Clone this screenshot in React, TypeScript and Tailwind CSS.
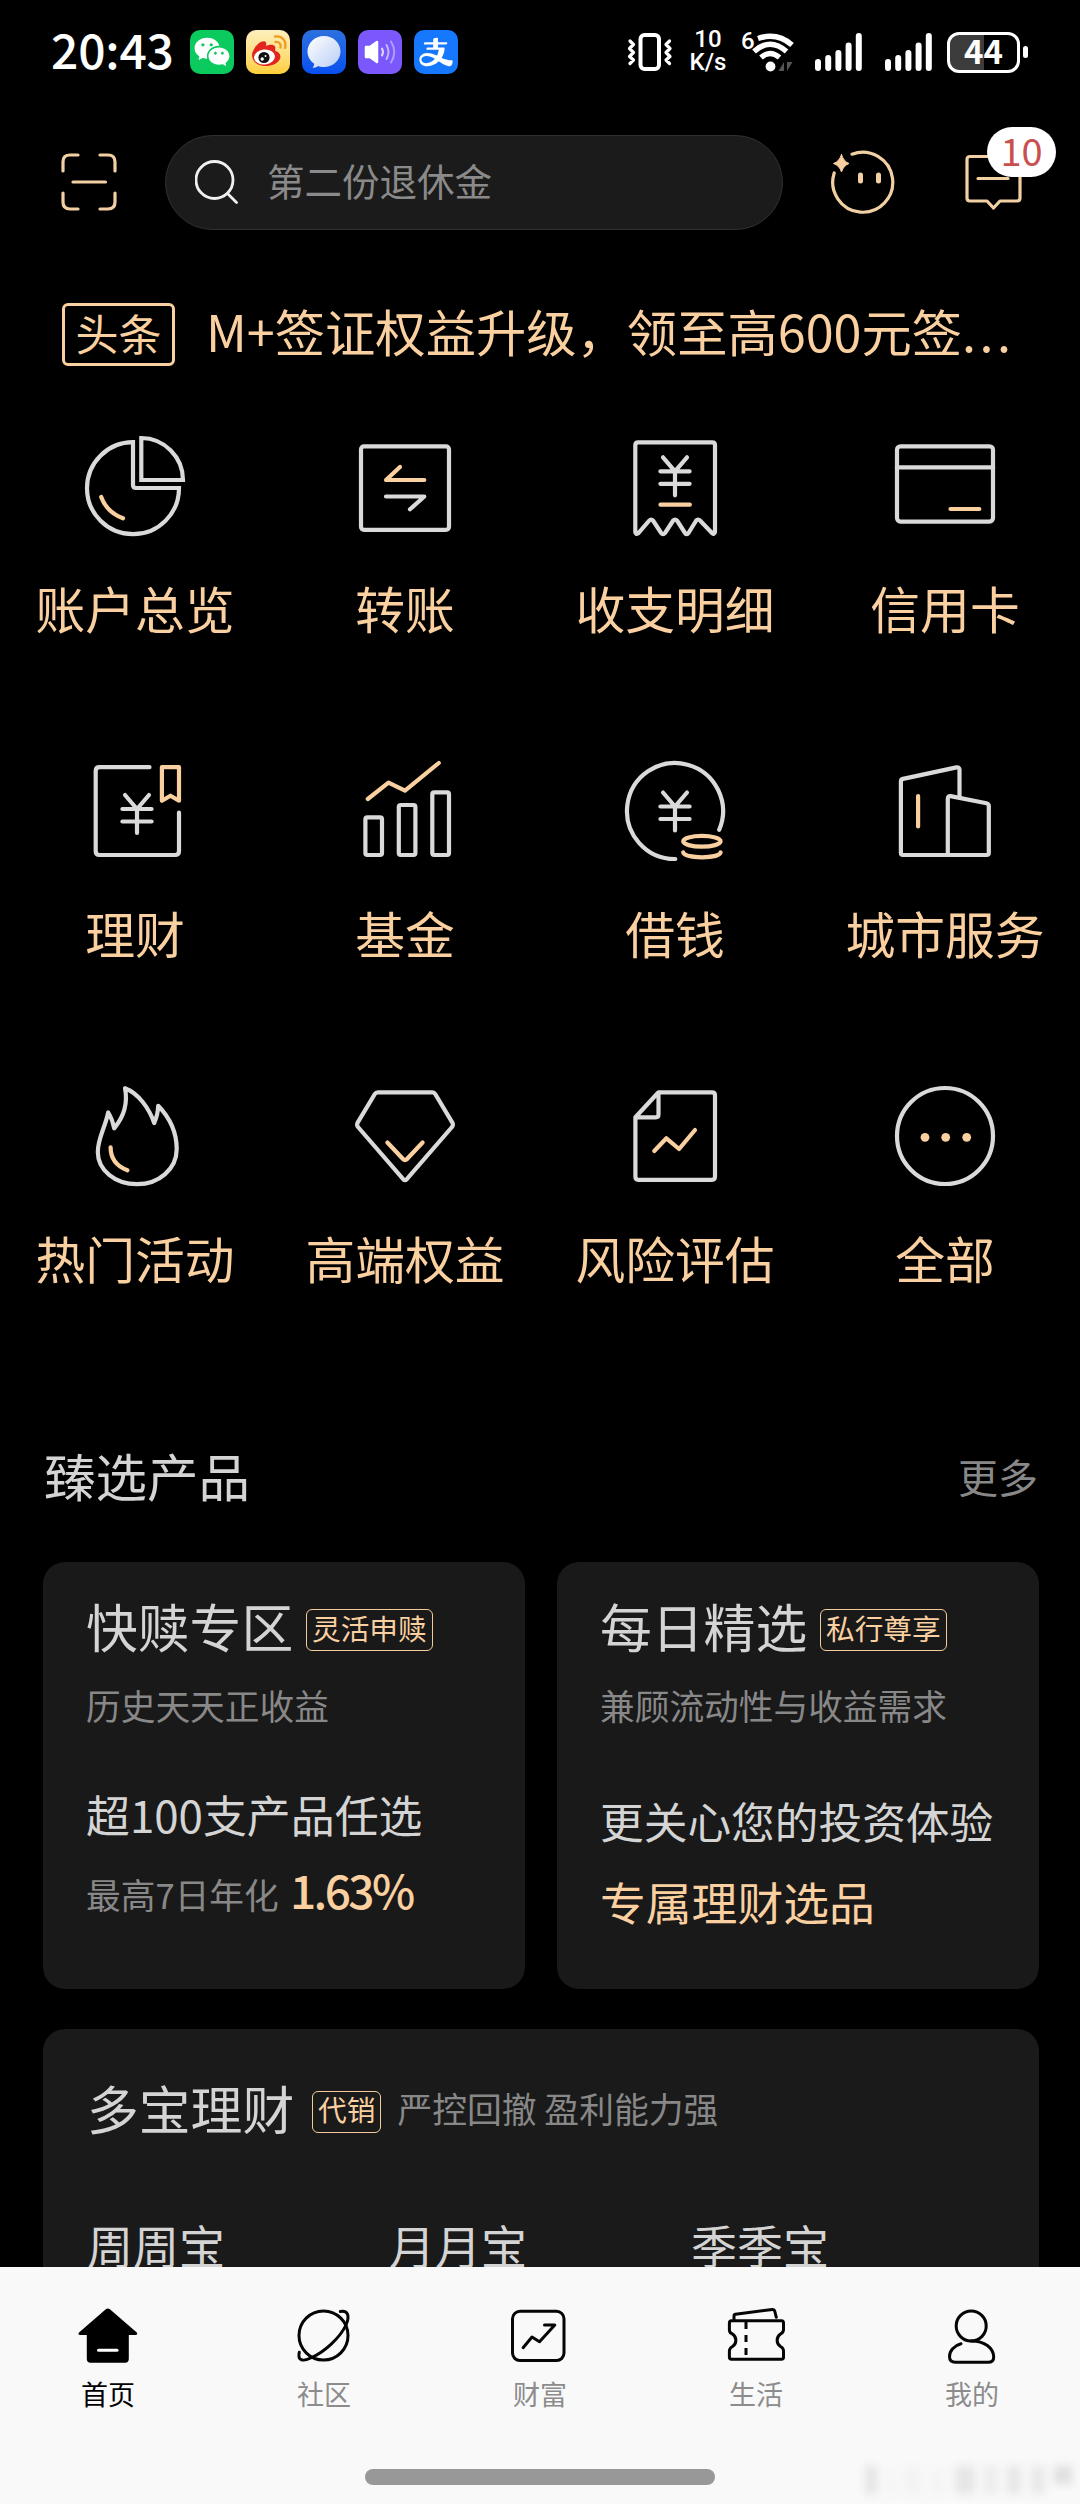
import type { ReactNode } from "react";
import { AiOutlineAlipay } from "react-icons/ai";
import { RiWechatFill } from "react-icons/ri";

const GOLD = "#fad0a0";
const SILVER = "#dadada";

function LineIcon({ children }: { children: ReactNode }) {
  return (
    <svg viewBox="0 0 100 100" className="block size-[100px] overflow-visible" fill="none" stroke={SILVER} strokeWidth={4.2} strokeLinecap="round" strokeLinejoin="round">
      {children}
    </svg>
  );
}

function Yen({ x, y }: { x: number; y: number }) {
  return (
    <path d={`M${x - 12} ${y}L${x} ${y + 14}L${x + 12} ${y}M${x} ${y + 14}V${y + 38}M${x - 14.6} ${y + 14}H${x + 14.6}M${x - 14.6} ${y + 26.5}H${x + 14.6}`} />
  );
}

const shortcuts: { label: string; icon: ReactNode }[] = [
  {
    label: "账户总览",
    icon: (
      <LineIcon>
        <path strokeLinejoin="miter" d="M48 6.2A46 46 0 1 0 94 52H51Q48 52 48 49Z" />
        <path strokeLinejoin="miter" d="M56.3 2V44H98A42 42 0 0 0 56.3 2Z" />
        <path stroke={GOLD} d="M16.2 61Q21.5 76 38 82.3" />
      </LineIcon>
    ),
  },
  {
    label: "转账",
    icon: (
      <LineIcon>
        <rect x="6" y="10.3" width="88" height="83.5" rx="3" />
        <path stroke={GOLD} d="M45 31L31 44H69.3" />
        <path d="M31 60.5H69.3L55 73.3" />
      </LineIcon>
    ),
  },
  {
    label: "收支明细",
    icon: (
      <LineIcon>
        <path d="M10.3 9Q10.3 6.3 13 6.3H87.3Q90 6.3 90 9V96Q89.5 99 87 97L75 84.5Q73 82.5 71.2 84.5L63.5 97Q61.7 99.5 60 97L52 84.5Q50 82.5 48.2 84.5L40 97Q38 99.5 36.2 97L28 84.5Q26 82.5 24.3 84.5L13.2 97.3Q10.6 99 10.3 96Z" />
        <Yen x={50} y={21.3} />
        <path stroke={GOLD} d="M35.5 68.7H64.8" />
      </LineIcon>
    ),
  },
  {
    label: "信用卡",
    icon: (
      <LineIcon>
        <rect x="2" y="10.3" width="96" height="75.3" rx="3.5" />
        <path d="M2 31.3H98" />
        <path stroke={GOLD} d="M55.5 73H84.3" />
      </LineIcon>
    ),
  },
  {
    label: "理财",
    icon: (
      <LineIcon>
        <path d="M64.5 6.2H14.5Q10.7 6.2 10.7 10V90Q10.7 94 14.5 94H90Q94 94 94 90V51.5" />
        <path stroke={GOLD} d="M76.9 6.2H94V39.7L85.5 34.7L76.9 39.7Z" />
        <Yen x={52} y={34} />
      </LineIcon>
    ),
  },
  {
    label: "基金",
    icon: (
      <LineIcon>
        <rect x="10.4" y="56.3" width="16.6" height="37.7" rx="2" />
        <rect x="43.8" y="44" width="16.6" height="50" rx="2" />
        <rect x="77.3" y="31.3" width="16.7" height="62.7" rx="2" />
        <path stroke={GOLD} d="M12.8 38L33.5 21.7L50 29.7L83.8 2" />
      </LineIcon>
    ),
  },
  {
    label: "借钱",
    icon: (
      <LineIcon>
        <path d="M50.3 98A48 48 0 1 1 94.2 68.7" />
        <Yen x={50} y={31.5} />
        <ellipse stroke={GOLD} cx="76.9" cy="80.3" rx="18.7" ry="5.4" />
        <path stroke={GOLD} d="M58.2 91.5C61 98 93 98 95.6 91.5" />
      </LineIcon>
    ),
  },
  {
    label: "城市服务",
    icon: (
      <LineIcon>
        <path d="M52.8 94H8Q5.9 94 5.9 92V20.5Q5.9 18.4 8 17.9L61.5 6.4Q64.3 6 64.5 8.5V36.5" />
        <path d="M52.8 38V92Q52.8 94 55 94H91.5Q93.8 94 93.8 92V45Q93.8 42.8 91.5 42.2L55.5 35.1Q52.8 34.8 52.8 38Z" />
        <path stroke={GOLD} d="M23.1 35V65.5" />
      </LineIcon>
    ),
  },
  {
    label: "热门活动",
    icon: (
      <LineIcon>
        <path d="M40 2.2C53 7 64 22 69.2 37C71.5 32 73 26 73.2 19.8C84 31 91.7 45 91.7 63C91.7 83 74 98.2 52 98.2C30 98.2 12.8 84 12.8 66C12.8 52 20 42 23.2 26.5C26 31 28 36 29.2 42.3C37 33 43.5 20 40 2.2Z" />
        <path stroke={GOLD} d="M25.6 61.3C25.6 72 31 80 42.4 84.3" />
      </LineIcon>
    ),
  },
  {
    label: "高端权益",
    icon: (
      <LineIcon>
        <path d="M23 6.3H77.5Q79.2 6.3 80.2 8L97.5 36.8Q98.5 39 97 41L51.8 93.2Q50 95 48.2 93.2L3 41Q1.5 39 2.5 36.8L19.8 8Q20.8 6.3 23 6.3Z" />
        <path stroke={GOLD} d="M32.4 56.5L48 73Q50 75.2 52 73L67.6 56.5" />
      </LineIcon>
    ),
  },
  {
    label: "风险评估",
    icon: (
      <LineIcon>
        <path d="M33.5 6.3H87Q90 6.3 90 9.3V90.5Q90 93.8 87 93.8H13.3Q10.4 93.8 10.4 90.5V31.3ZM33.5 6.3V28.5Q33.5 31.3 30.8 31.3H10.4" />
        <path stroke={GOLD} d="M29.3 65L41.4 52.3L54.1 63L70 44" />
      </LineIcon>
    ),
  },
  {
    label: "全部",
    icon: (
      <LineIcon>
        <circle cx="50" cy="50" r="48" />
        <g fill={GOLD} stroke="none">
          <circle cx="30" cy="51.3" r="4.4" />
          <circle cx="50.7" cy="51.3" r="4.4" />
          <circle cx="71.7" cy="51.3" r="4.4" />
        </g>
      </LineIcon>
    ),
  },
];

function Signal() {
  return (
    <svg viewBox="0 0 48 38" className="block h-[38px] w-[48px]" stroke="#fff" strokeWidth={6} strokeLinecap="round">
      <path d="M3 29V35M13.2 25V35M23.4 20V35M33.6 12.5V35M43.8 3V35" />
    </svg>
  );
}

function StatusBar() {
  return (
    <div className="flex h-[104px] shrink-0 items-center text-white">
      <div className="ml-[51px] -mt-[8px] w-[139px] whitespace-nowrap text-[48px] leading-[60px] font-medium tracking-[-0.2px]">20:43</div>
      <div className="flex gap-3">
        <div className="flex size-11 items-center justify-center rounded-[10px] bg-[#0ccb5e]">
          <RiWechatFill className="size-[38px] text-white" />
        </div>
        <svg viewBox="0 0 44 44" className="size-11 rounded-[10px] bg-linear-to-b from-[#fdf0bd] to-[#ffcf35]">
          <path d="M6 25C6 19 14 10 19 11.500C21 12.500 20 15 20 16C23 14.500 28 14 29 16.500C30 18.500 28.500 20 29.500 21C33 22 35.500 25 34 29C31.500 34 25 36.500 18 36C11 35.500 6 31 6 25Z" fill="#e2251f" />
          <ellipse cx="18.500" cy="27" rx="10.500" ry="7.500" fill="#fff" transform="rotate(-6 18.500 27)" />
          <circle cx="18" cy="27.500" r="5.600" fill="#111" />
          <circle cx="16.200" cy="29" r="1.700" fill="#fff" />
          <circle cx="19.500" cy="26" r="1" fill="#fff" />
          <path d="M29 6.500C36 5.500 41 11 39 18M29.500 12C33 11.500 35.500 14 34.500 17.500" fill="none" stroke="#ef9c22" strokeWidth="2.300" strokeLinecap="round" />
        </svg>
        <svg viewBox="0 0 44 44" className="size-11 rounded-[10px] bg-linear-to-b from-[#2c70df] to-[#0a4ff0]">
          <defs>
            <linearGradient id="bubble" x1="0" y1="0" x2="1" y2="1">
              <stop offset="0" stopColor="#fff" />
              <stop offset="1" stopColor="#b9cdf6" />
            </linearGradient>
          </defs>
          <path d="M22 6C31 6 38.500 12.800 38.500 21.500S31 37 22 37C19.500 37 17.500 36.600 16 36C14.500 37.500 12.500 38 10.500 37.600C12 36.200 12.300 34.800 12 33.500C8 30.800 5.500 26.500 5.500 21.500C5.500 12.800 13 6 22 6Z" fill="url(#bubble)" />
        </svg>
        <svg viewBox="0 0 44 44" className="size-11 rounded-[10px] bg-[#7a58fb]" fill="none" strokeLinecap="round">
          <path d="M8 17H12L19 12V32L12 27H8Z" fill="#fff" stroke="#fff" strokeWidth="2.500" strokeLinejoin="round" />
          <path d="M24 18.500Q26 22 24 25.500" stroke="#e0d8ff" strokeWidth="2" />
          <path d="M28.500 15Q32.500 22 28.500 29" stroke="#c3b4ff" strokeWidth="2" />
          <path d="M33 11.500Q39.500 22 33 32.500" stroke="#b09dff" strokeWidth="2" />
        </svg>
        <div className="flex size-11 items-center justify-center rounded-[10px] bg-[#1677ff]">
          <AiOutlineAlipay className="size-[38px] text-white" />
        </div>
      </div>
      <div className="ml-auto mr-[52px] flex items-center">
        <svg viewBox="0 0 46 38" className="h-[38px] w-[46px]" fill="none" stroke="#fff" strokeLinecap="round" strokeLinejoin="round">
          <rect x="13.500" y="2" width="18.500" height="34" rx="4" strokeWidth="4" />
          <path d="M3 8L6.500 11.500L2.500 15.500L6.500 19.500L2.500 23.500L6.500 27L3 30.500M42.500 8L39 11.500L43 15.500L39 19.500L43 23.500L39 27L42.500 30.500" strokeWidth="3.200" />
        </svg>
        <div className="ml-[11px] -mt-[2px] flex w-[48px] flex-col items-center font-['Roboto',sans-serif] text-[24px] leading-[23px] font-medium">
          <span>10</span>
          <span>K/s</span>
        </div>
        <div className="ml-[9px] flex h-[40px] w-[54px]">
          <span className="-mt-[7px] w-[12px] font-['Roboto',sans-serif] text-[24px] leading-[32px] font-medium">6</span>
          <svg viewBox="0 0 42 40" className="h-[40px] w-[42px] overflow-visible" fill="none" stroke="#fff" strokeWidth="5.500">
            <path d="M5 6.500Q24 0 39 13" />
            <path d="M1 19.500Q17 5 33.500 19.500" />
            <path d="M8 25.500Q17 17.500 26.500 25.500" />
            <circle cx="17.500" cy="34.500" r="4.900" fill="#fff" stroke="none" />
            <path d="M31 30V39H25.500ZM34 39V30H39.500Z" fill="#555" stroke="none" />
          </svg>
        </div>
        <div className="ml-[20px]"><Signal /></div>
        <div className="ml-[22px]"><Signal /></div>
        <div className="ml-[14px] flex h-[41px] w-[73px] items-center justify-center rounded-[12px] border-[3px] border-white bg-linear-to-r from-[#3c3c3c] from-50% to-black to-50%">
          <span className="-mt-[4px] text-[33px] leading-[35px] font-bold">44</span>
        </div>
        <div className="ml-[3px] h-[12px] w-[5px] rounded-full bg-white" />
      </div>
    </div>
  );
}

function Header() {
  return (
    <div className="flex h-[156px] shrink-0 items-center pl-[61px]">
      <svg viewBox="0 0 56 58" className="h-[58px] w-[56px]" fill="none" stroke="#f3d0a3" strokeWidth="3.200" strokeLinecap="round">
        <path d="M17 2H9Q2 2 2 9V18M39 2H47Q54 2 54 9V18M2 40V49Q2 56 9 56H17M54 40V49Q54 56 47 56H39M12 29H44.500" />
      </svg>
      <div className="ml-[48px] flex h-[95px] w-[618px] items-center rounded-full border border-[#303030] bg-[#1b1b1b] pl-[29px]">
        <svg viewBox="0 0 44 44" className="size-11" fill="none" stroke="#f0f0f0" strokeWidth="2.800" strokeLinecap="round">
          <circle cx="19.500" cy="20" r="18.500" />
          <path d="M33 34L41.500 42.500" />
        </svg>
        <span className="ml-[28px] -mt-[5px] text-[37.500px] leading-[50px] text-[#8a8a8a]">第二份退休金</span>
      </div>
      <svg viewBox="0 0 64 66" className="ml-[48px] h-[66px] w-[64px]" fill="none" stroke="#f3d0a3" strokeWidth="3.200" strokeLinecap="round">
        <path d="M21 5.200A30 30 0 1 1 3.200 24" />
        <path d="M10.500 5.500Q12.500 12.500 18 14.500Q12.500 16.500 10.500 23Q8.500 16.500 2.500 14.500Q8.500 12.500 10.500 5.500Z" fill="#fad0a0" stroke="#fad0a0" strokeWidth="1" />
        <path d="M29.500 26V32M47.500 26V32" strokeWidth="5" />
      </svg>
      <div className="relative ml-[70px] h-[58px] w-[58px]">
        <svg viewBox="0 0 58 58" className="size-[58px]" fill="none" stroke="#f3d0a3" strokeWidth="3.200" strokeLinecap="round" strokeLinejoin="round">
          <path d="M5 3.500H52Q55 3.500 55 6.500V45Q55 48 52 48H35L28.500 55L22 48H5Q2 48 2 45V6.500Q2 3.500 5 3.500ZM13 25.500H43" />
        </svg>
        <div className="absolute left-[22px] -top-[26px] flex h-[50px] w-[69px] items-center justify-center rounded-full bg-white">
          <span className="-mt-[5px] text-[38px] leading-[50px] text-[#c8504f]">10</span>
        </div>
      </div>
    </div>
  );
}

function Tag({ children }: { children: ReactNode }) {
  return (
    <span className="flex h-[42px] items-center rounded-[6px] border-[1.500px] border-[#f3cc9c] px-[5px] text-[28.700px] text-[#fad0a0]">
      <span className="-mt-[5px] leading-[40px]">{children}</span>
    </span>
  );
}

function ProductCard({ title, tag, note, children }: { title: string; tag: string; note: string; children: ReactNode }) {
  return (
    <div className="flex h-[427px] w-[482px] flex-col rounded-[22px] bg-[#191919] pl-[43px] pt-[34px] whitespace-nowrap">
      <div className="flex h-[60px] items-center">
        <h3 className="w-[220px] text-[51.800px] leading-[60px] text-[#d4d4d4]">{title}</h3>
        <div className="mt-[8px]"><Tag>{tag}</Tag></div>
      </div>
      <p className="mt-[24px] text-[34.700px] leading-[50px] text-[#888]">{note}</p>
      {children}
    </div>
  );
}

const tabs: { label: string; icon: ReactNode }[] = [
  {
    label: "首页",
    icon: (
      <>
        <path d="M27.500 3.500Q29.800 1.500 32.200 3.500L58.800 26.500Q60 28.800 57.500 29H50.800V53Q50.800 56.700 47 56.700H12.600Q8.800 56.700 8.800 53V29H2Q-0.500 28.800 1 26.500Z" fill="#000" stroke="none" />
        <path d="M20.500 44.300H39" stroke="#fff" />
      </>
    ),
  },
  {
    label: "社区",
    icon: (
      <>
        <circle cx="29.500" cy="29.500" r="24.500" />
        <path d="M46.300 5.500C54 4 56 10 52 19C46 32 30 46 17.700 51.500C8 56.500 3.500 54 5.300 46.300" />
      </>
    ),
  },
  {
    label: "财富",
    icon: (
      <>
        <rect x="2.500" y="5.300" width="51.500" height="49.300" rx="7.500" />
        <path d="M13.100 41.700L22 31L29.500 35.700L44.800 19H34.500" />
      </>
    ),
  },
  {
    label: "生活",
    icon: (
      <>
        <path d="M5.500 14.700H55.500Q57.500 14.700 57.500 17V24Q57 27 54.500 28C50 31 50 37.500 54.500 40.500Q57.500 42 57.500 45V51Q57.500 53.300 55.500 53.300H5.500Q3.400 53.300 3.400 51V45Q3.500 42 6.500 40.500C11 37.500 11 31 6.500 28Q3.400 27 3.400 24V17Q3.400 14.700 5.500 14.700Z" />
        <path d="M8 14V10Q8 8.500 9.500 8.300L46.500 3.500Q48.200 3.300 48.700 5L50.300 11.300" />
        <path d="M20 16V54" strokeDasharray="7 6" strokeLinecap="butt" />
      </>
    ),
  },
  {
    label: "我的",
    icon: (
      <>
        <circle cx="29.200" cy="20" r="15" />
        <path d="M19 37.700C12 39.500 7.500 45 7.500 50.500Q7.500 56.300 13.500 56.300H46Q52 56.300 51.700 50.500C51 42 43 35 29.200 35" />
      </>
    ),
  },
];

function TabBar() {
  return (
    <nav className="relative flex h-[237px] shrink-0 flex-col bg-[#f9f9f9]">
      <div className="grid grid-cols-5 pt-[39px]">
        {tabs.map((tab, i) => (
          <div key={tab.label} className="flex flex-col items-center">
            <svg viewBox="0 0 60 60" className="size-[60px] overflow-visible" fill="none" stroke="#050505" strokeWidth="3" strokeLinecap="round" strokeLinejoin="round">
              {tab.icon}
            </svg>
            <span className={i === 0 ? "mt-[8px] text-[27px] leading-[40px] text-black" : "mt-[8px] text-[27px] leading-[40px] text-[#8c8c8c]"}>{tab.label}</span>
          </div>
        ))}
      </div>
      <div className="mx-auto mt-[55px] h-[16px] w-[350px] rounded-full bg-[#989898]" />
      <div className="absolute right-[8px] bottom-[10px] flex h-[32px] w-[207px] items-end justify-between blur-[4px]">
        <i className="h-[28px] w-[12px] bg-[#e4e4e4]" />
        <i className="h-[24px] w-[8px] bg-[#f4f4f4]" />
        <i className="h-[26px] w-[18px] bg-[#f3f3f3]" />
        <i className="h-[24px] w-[14px] bg-[#f4f4f4]" />
        <i className="h-[28px] w-[20px] bg-[#e6e6e6]" />
        <i className="h-[28px] w-[14px] bg-[#ececec]" />
        <i className="h-[28px] w-[14px] bg-[#e6e6e6]" />
        <i className="h-[28px] w-[14px] bg-[#e8e8e8]" />
        <i className="mb-[10px] h-[18px] w-[18px] bg-[#dfdfdf]" />
      </div>
    </nav>
  );
}

export default function App() {
  return (
    <div className="flex h-[2504px] w-[1080px] flex-col overflow-hidden bg-black font-['Noto_Sans_CJK_SC',sans-serif]">
      <StatusBar />
      <Header />
      <div className="flex h-[149px] shrink-0 items-center pl-[62px] whitespace-nowrap text-[#fad0a0]">
        <div className="flex h-[63px] w-[113px] items-center justify-center rounded-[6px] border-[3px] border-[#fad0a0]">
          <span className="-mt-[6px] text-[43px] leading-[56px]">头条</span>
        </div>
        <div className="-mt-[10px] ml-[31px] text-[50.300px] leading-[60px]">
          M+签证权益升级，领至高600元签<span className="tracking-[3.500px]">...</span>
        </div>
      </div>

      <main className="flex min-h-0 flex-1 flex-col overflow-hidden">
        <div className="grid shrink-0 grid-cols-4 pt-[27px]">
          {shortcuts.map((s) => (
            <div key={s.label} className="flex h-[325px] flex-col items-center">
              {s.icon}
              <span className="mt-[41px] text-[49.800px] leading-[60px] whitespace-nowrap text-[#fad0a0]">{s.label}</span>
            </div>
          ))}
        </div>

        <div className="flex h-[151px] shrink-0 justify-between pt-[34px] pr-[42px] pl-[44px]">
          <h2 className="text-[51.500px] leading-[60px] text-[#d4d4d4]">臻选产品</h2>
          <span className="text-[40px] leading-[62px] text-[#888]">更多</span>
        </div>

        <div className="flex shrink-0 gap-8 pl-[43px]">
          <ProductCard title="快赎专区" tag="灵活申赎" note="历史天天正收益">
            <p className="mt-[54px] text-[43.900px] leading-[60px] text-[#d4d4d4]">超100支产品任选</p>
            <div className="mt-[15px] flex h-[60px] items-baseline">
              <span className="w-[204px] text-[34.700px] leading-[60px] text-[#888]">最高7日年化</span>
              <span className="text-[46px] leading-[60px] font-medium tracking-[-2.600px] text-[#fad0a0]">1.63%</span>
            </div>
          </ProductCard>
          <ProductCard title="每日精选" tag="私行尊享" note="兼顾流动性与收益需求">
            <p className="mt-[60px] text-[43.700px] leading-[60px] text-[#d4d4d4]">更关心您的投资体验</p>
            <p className="mt-[21px] text-[45.800px] leading-[60px] text-[#fad0a0]">专属理财选品</p>
          </ProductCard>
        </div>

        <div className="mt-[40px] ml-[43px] h-[440px] w-[996px] shrink-0 rounded-[22px] bg-[#1a1a1a] pt-[49px] pl-[44px] whitespace-nowrap">
          <div className="flex h-[60px] items-center">
            <h3 className="w-[225px] text-[51.800px] leading-[60px] text-[#d4d4d4]">多宝理财</h3>
            <div className="mt-[7px]"><Tag>代销</Tag></div>
            <span className="ml-[16px] text-[34.800px] leading-[60px] text-[#888]">严控回撤 盈利能力强</span>
          </div>
          <div className="mt-[76px] grid grid-cols-[302px_302px_302px] text-[46px] leading-[60px] text-[#d4d4d4]">
            <span>周周宝</span>
            <span>月月宝</span>
            <span>季季宝</span>
          </div>
        </div>
      </main>
      <TabBar />
    </div>
  );
}
